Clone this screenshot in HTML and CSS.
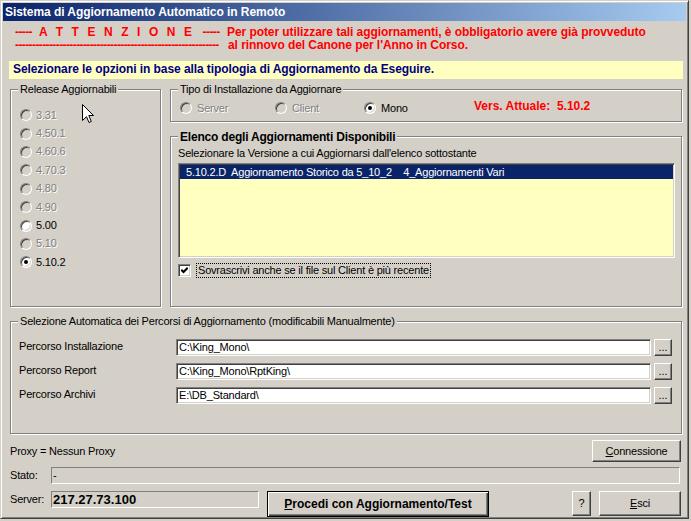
FILE: index.html
```html
<!DOCTYPE html>
<html lang="it">
<head>
<meta charset="utf-8">
<title>Sistema di Aggiornamento Automatico in Remoto</title>
<link rel="stylesheet" href="styles.css">
</head>
<body>
<div class="window">
  <div class="titlebar">Sistema di Aggiornamento Automatico in Remoto</div>

  <div class="warning">
    <div><span class="dash">-----</span><span class="spaced">A T T E N Z I O N E</span><span class="dash">-----</span></div>
    <div>Per poter utilizzare tali aggiornamenti, è obbligatorio avere già provveduto</div>
    <div><span class="dash">------------------------------------------------------------</span></div>
    <div class="second">al rinnovo del Canone per l'Anno in Corso.</div>
  </div>

  <div class="hint">Selezionare le opzioni in base alla tipologia di Aggiornamento da Eseguire.</div>

  <div class="main">
    <div class="group release">
      <div class="group-title">Release Aggiornabili</div>
      <div class="opt"><span class="radio dis"></span><span class="dis-text">3.31</span></div>
      <div class="opt"><span class="radio dis"></span><span class="dis-text">4.50.1</span></div>
      <div class="opt"><span class="radio dis"></span><span class="dis-text">4.60.6</span></div>
      <div class="opt"><span class="radio dis"></span><span class="dis-text">4.70.3</span></div>
      <div class="opt"><span class="radio dis"></span><span class="dis-text">4.80</span></div>
      <div class="opt"><span class="radio dis"></span><span class="dis-text">4.90</span></div>
      <div class="opt"><span class="radio"></span><span>5.00</span></div>
      <div class="opt"><span class="radio dis"></span><span class="dis-text">5.10</span></div>
      <div class="opt"><span class="radio on"></span><span>5.10.2</span></div>
    </div>

    <div class="rcol">
      <div class="group tipo">
        <div class="group-title">Tipo di Installazione da Aggiornare</div>
        <div class="topt t-server"><span class="radio dis"></span><span class="dis-text">Server</span></div>
        <div class="topt t-client"><span class="radio dis"></span><span class="dis-text">Client</span></div>
        <div class="topt t-mono"><span class="radio on"></span><span>Mono</span></div>
        <div class="vers">Vers. Attuale:  5.10.2</div>
      </div>

      <div class="group elenco">
        <div class="group-title bold">Elenco degli Aggiornamenti Disponibili</div>
        <div class="subtitle">Selezionare la Versione a cui Aggiornarsi dall'elenco sottostante</div>
        <div class="list">
          <div class="list-sel">5.10.2.D  Aggiornamento Storico da 5_10_2    4_Aggiornamenti Vari</div>
        </div>
        <div class="checkrow">
          <span class="check"><svg class="tick" width="7" height="7" viewBox="0 0 7 7"><polyline points="0.3,2.8 2.5,5 6.7,0.8" fill="none" stroke="#000" stroke-width="2"/></svg></span>
          <span class="check-label">Sovrascrivi anche se il file sul Client è più recente</span>
        </div>
      </div>
    </div>
  </div>

  <div class="group percorsi">
    <div class="group-title">Selezione Automatica dei Percorsi di Aggiornamento (modificabili Manualmente)</div>
    <div class="prow">
      <div class="plabel">Percorso Installazione</div>
      <div class="field">C:\King_Mono\</div>
      <div class="btn dots">...</div>
    </div>
    <div class="prow">
      <div class="plabel">Percorso Report</div>
      <div class="field">C:\King_Mono\RptKing\</div>
      <div class="btn dots">...</div>
    </div>
    <div class="prow">
      <div class="plabel">Percorso Archivi</div>
      <div class="field">E:\DB_Standard\</div>
      <div class="btn dots">...</div>
    </div>
  </div>

  <div class="proxy-row">
    <div>Proxy = Nessun Proxy</div>
    <div class="btn b-conn"><span><u>C</u>onnessione</span></div>
  </div>

  <div class="stato-row">
    <div class="slabel">Stato:</div>
    <div class="sfield">-</div>
  </div>

  <div class="server-row">
    <div class="slabel">Server:</div>
    <div class="sfield srv-field">217.27.73.100</div>
    <div class="btn b-proc"><span><u>P</u>rocedi con Aggiornamento/Test</span></div>
    <div class="btn b-help">?</div>
    <div class="btn b-esci"><span><u>E</u>sci</span></div>
  </div>

  <svg class="cursor" width="13" height="20" viewBox="0 0 13 20">
    <path d="M0.5 0.5 L0.5 16.5 L4.5 12.7 L7 18.5 L9.3 17.5 L6.8 11.5 L11.5 11.5 Z" fill="#fff" stroke="#000" stroke-width="1" stroke-linejoin="miter"/>
  </svg>
</div>
</body>
</html>
```

FILE: styles.css
```css
* { box-sizing: border-box; }

html, body { margin: 0; padding: 0; }

body {
  background: #d4d0c8;
  font-family: "Liberation Sans", Arial, sans-serif;
  font-size: 11px;
  line-height: 13px;
  letter-spacing: -0.2px;
  color: #000;
}

.window {
  position: relative;
  width: 689px;
  height: 519px;
  border: 1px solid;
  border-color: #d4d0c8 #404040 #404040 #d4d0c8;
  box-shadow: inset 1px 1px 0 #fff, inset -1px -1px 0 #808080;
  padding: 2px;
  background: #d4d0c8;
  overflow: hidden;
}

.titlebar {
  height: 18px;
  background: linear-gradient(to right, #0a246a, #a6caf0);
  color: #fff;
  font-weight: bold;
  font-size: 12px;
  line-height: 18px;
  letter-spacing: -0.05px;
  padding-left: 2px;
  white-space: nowrap;
}

/* red warning */
.warning {
  margin: 4.5px 0 0 12px;
  display: grid;
  grid-template-columns: 212px auto;
  color: #ff0000;
  font-weight: bold;
  font-size: 12px;
  line-height: 13px;
  letter-spacing: -0.07px;
  white-space: nowrap;
}
.dash { letter-spacing: -0.6px; }
.spaced { letter-spacing: 2.6px; margin: 0 8px 0 7px; }
.second { padding-left: 1px; }

/* yellow hint */
.hint {
  margin: 9.5px 0 0 6px;
  width: 674px;
  height: 18px;
  background: #ffffc0;
  color: #000080;
  font-weight: bold;
  font-size: 12px;
  line-height: 16px;
  letter-spacing: -0.08px;
  padding-left: 4px;
  white-space: nowrap;
}

/* group boxes */
.main {
  display: flex;
  gap: 9px;
  margin: 10px 0 0 7px;
}
.group {
  position: relative;
  border: 1px solid #808080;
  box-shadow: 1px 1px 0 #fff, inset 1px 1px 0 #fff;
}
.group-title {
  position: absolute;
  top: -7px;
  left: 7px;
  padding: 0 2px;
  background: #d4d0c8;
  white-space: nowrap;
}
.group-title.bold {
  top: -6px;
  font-weight: bold;
  font-size: 12px;
  letter-spacing: -0.2px;
}

.release {
  flex: none;
  width: 151px;
  height: 218px;
  padding: 16px 0 0 9px;
}
.opt {
  display: flex;
  align-items: center;
  height: 18.4px;
  white-space: nowrap;
}

.radio {
  flex: none;
  position: relative;
  width: 12px;
  height: 12px;
  border-radius: 50%;
  background: #fff;
  border: 1px solid;
  border-color: #808080 #fff #fff #808080;
  box-shadow: inset 1px 1px 0 #404040, inset -1px -1px 0 #d4d0c8;
  margin-right: 4px;
}
.radio.dis { background: #d4d0c8; }
.radio.on::after {
  content: "";
  position: absolute;
  left: 3px;
  top: 3px;
  width: 4px;
  height: 4px;
  border-radius: 50%;
  background: #000;
}
.dis-text {
  color: #808080;
  text-shadow: 1px 1px 0 #fff;
}

.rcol {
  flex: none;
  width: 512px;
  display: flex;
  flex-direction: column;
}

.tipo {
  height: 33px;
  padding: 11px 0 0 9px;
  display: flex;
  align-items: flex-start;
}
.topt {
  display: flex;
  align-items: center;
  height: 14px;
  white-space: nowrap;
}
.topt .radio { margin-right: 5px; }
.t-server { width: 95px; }
.t-client { width: 89px; }
.t-mono { width: 110px; }
.vers {
  color: #ff0000;
  font-weight: bold;
  font-size: 12px;
  letter-spacing: 0;
  line-height: 14px;
  margin-top: -2px;
  white-space: pre;
}

.elenco {
  margin-top: 14px;
  height: 171px;
  padding: 10px 0 0 7px;
}
.subtitle { white-space: nowrap; }
.list {
  margin-top: 3px;
  width: 497px;
  height: 95px;
  background: #ffffc0;
  border: 1px solid;
  border-color: #808080 #fff #fff #808080;
  box-shadow: inset 1px 1px 0 #404040, inset -1px -1px 0 #d4d0c8;
  padding: 1px;
}
.list-sel {
  height: 14px;
  line-height: 14px;
  background: #0a246a;
  color: #fff;
  padding-left: 6px;
  white-space: pre;
}

.checkrow {
  display: flex;
  align-items: center;
  margin-top: 5px;
  height: 15px;
}
.check {
  flex: none;
  position: relative;
  width: 13px;
  height: 13px;
  background: #fff;
  border: 1px solid;
  border-color: #808080 #fff #fff #808080;
  box-shadow: inset 1px 1px 0 #404040, inset -1px -1px 0 #d4d0c8;
}
.tick {
  position: absolute;
  left: 2px;
  top: 2px;
}
.check-label {
  margin-left: 5px;
  border: 1px dotted #000;
  padding: 0 1px;
  line-height: 13px;
  white-space: nowrap;
}

/* paths */
.percorsi {
  margin: 14px 0 0 7px;
  width: 672px;
  height: 113px;
  padding: 17px 0 0 8px;
}
.prow {
  display: flex;
  align-items: flex-start;
  height: 17px;
  margin-bottom: 7px;
}
.plabel {
  width: 157px;
  line-height: 15px;
  white-space: nowrap;
}
.field {
  width: 475px;
  height: 17px;
  background: #fff;
  border: 1px solid;
  border-color: #808080 #fff #fff #808080;
  box-shadow: inset 1px 1px 0 #404040, inset -1px -1px 0 #d4d0c8;
  padding: 1px 0 0 2px;
  line-height: 13px;
  white-space: nowrap;
}

.btn {
  display: flex;
  align-items: center;
  justify-content: center;
  background: #d4d0c8;
  border: 1px solid;
  border-color: #fff #404040 #404040 #fff;
  box-shadow: inset -1px -1px 0 #808080, inset 1px 1px 0 #d4d0c8;
  white-space: nowrap;
}
.dots {
  width: 18px;
  height: 17px;
  margin-left: 3px;
  letter-spacing: 0;
}

/* bottom */
.proxy-row {
  display: flex;
  justify-content: space-between;
  align-items: center;
  width: 671px;
  height: 22px;
  margin: 6px 0 0 7px;
}
.b-conn {
  width: 89px;
  height: 22px;
}

.stato-row {
  display: flex;
  height: 17px;
  margin: 5px 0 0 7px;
}
.slabel {
  width: 41px;
  line-height: 17px;
}
.sfield {
  width: 629px;
  height: 17px;
  border: 1px solid;
  border-color: #808080 #fff #fff #808080;
  padding-left: 1px;
  line-height: 15px;
  white-space: nowrap;
}

.server-row {
  display: flex;
  align-items: flex-start;
  margin: 7px 0 0 7px;
}
.srv-field {
  width: 208px;
  font-weight: bold;
  font-size: 13px;
  letter-spacing: 0;
}
.b-proc {
  margin-left: 8px;
  width: 222px;
  height: 26px;
  font-weight: bold;
  font-size: 12px;
  letter-spacing: 0;
  border: 1px solid #000;
  box-shadow: inset 1px 1px 0 #fff, inset -1px -1px 0 #404040, inset -2px -2px 0 #808080;
}
.b-help {
  margin-left: 83px;
  width: 19px;
  height: 25px;
}
.b-esci {
  margin-left: 8px;
  width: 82px;
  height: 25px;
}

.cursor {
  position: absolute;
  left: 81px;
  top: 103px;
}
```
